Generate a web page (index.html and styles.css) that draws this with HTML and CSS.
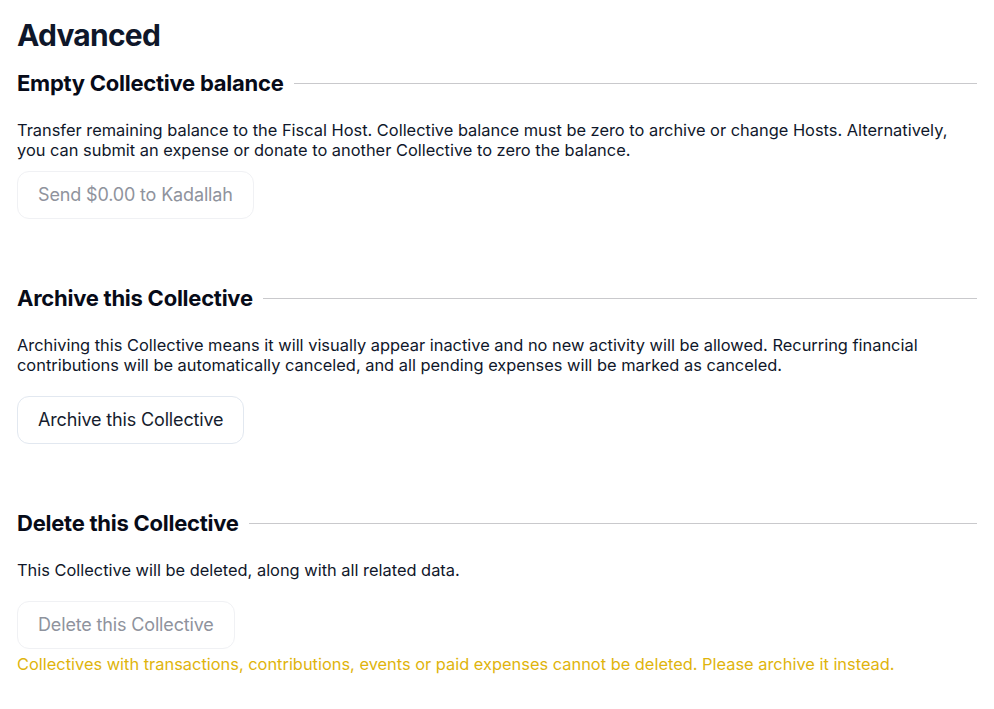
FILE: index.html
```html
<!DOCTYPE html>
<html lang="en">
<head>
<meta charset="utf-8">
<title>Advanced</title>
<link rel="stylesheet" href="styles.css">
</head>
<body>
<main class="page">
  <h1 class="title">Advanced</h1>

  <section class="section">
    <div class="section-head">
      <h2 class="section-title">Empty Collective balance</h2>
      <span class="rule"></span>
    </div>
    <p class="desc desc-tight">Transfer remaining balance to the Fiscal Host. Collective balance must be zero to archive or change Hosts. Alternatively, you can submit an expense or donate to another Collective to zero the balance.</p>
    <button class="btn" disabled>Send $0.00 to Kadallah</button>
  </section>

  <section class="section">
    <div class="section-head">
      <h2 class="section-title">Archive this Collective</h2>
      <span class="rule"></span>
    </div>
    <p class="desc">Archiving this Collective means it will visually appear inactive and no new activity will be allowed. Recurring financial contributions will be automatically canceled, and all pending expenses will be marked as canceled.</p>
    <button class="btn">Archive this Collective</button>
  </section>

  <section class="section">
    <div class="section-head">
      <h2 class="section-title">Delete this Collective</h2>
      <span class="rule"></span>
    </div>
    <p class="desc">This Collective will be deleted, along with all related data.</p>
    <button class="btn" disabled>Delete this Collective</button>
    <p class="warning">Collectives with transactions, contributions, events or paid expenses cannot be deleted. Please archive it instead.</p>
  </section>
</main>
</body>
</html>
```

FILE: styles.css
```css
* { box-sizing: border-box; }

html, body {
  margin: 0;
  padding: 0;
  background: #ffffff;
}

body {
  font-family: Inter, "Noto Sans", sans-serif;
  color: #0f172a;
  font-size: 16.4px;
  line-height: 20px;
}

.page {
  padding: 15px 17px 0 17px;
  display: flex;
  flex-direction: column;
}

.title {
  margin: 0;
  font-size: 30px;
  line-height: 40px;
  font-weight: 700;
  color: #0f172a;
  letter-spacing: -0.75px;
}

.section {
  display: flex;
  flex-direction: column;
  align-items: flex-start;
  margin-bottom: 65px;
}

.section:first-of-type { margin-top: 14px; }

.section-head {
  display: flex;
  align-items: center;
  gap: 10px;
  width: 100%;
  height: 28px;
}

.section-title {
  margin: 0;
  font-size: 22px;
  line-height: 28px;
  font-weight: 700;
  color: #070b18;
  white-space: nowrap;
  letter-spacing: -0.25px;
}

.rule {
  flex: 1;
  height: 1px;
  background: #c9c9cc;
}

.desc {
  margin: 23px 0 21px 0;
  font-size: 16.4px;
  line-height: 20px;
}

.desc-tight { margin-bottom: 11px; }

.btn {
  font-family: Inter, "Noto Sans", sans-serif;
  font-size: 18px;
  line-height: 22px;
  font-weight: 400;
  letter-spacing: -0.15px;
  height: 48px;
  padding: 0 20px;
  border-radius: 12px;
  border: 1px solid #e2e8f0;
  background: #ffffff;
  color: #161d2e;
  cursor: pointer;
}

.btn:disabled {
  color: #8f939d;
  border-color: #f0f1f4;
  cursor: not-allowed;
}

.warning {
  margin: 5px 0 0 0;
  color: #e0b40c;
  font-size: 16.4px;
  line-height: 20px;
}
```
